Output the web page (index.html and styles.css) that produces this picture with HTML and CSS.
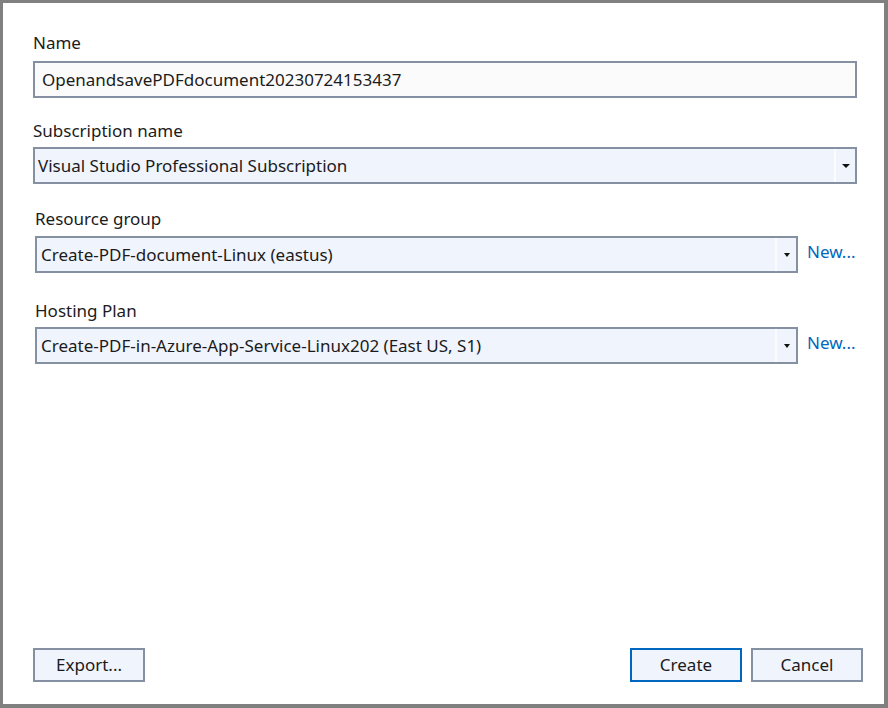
FILE: index.html
```html
<!DOCTYPE html>
<html lang="en">
<head>
<meta charset="utf-8">
<title>Create App Service</title>
<link rel="stylesheet" href="styles.css">
</head>
<body>
<div class="dialog">
  <div class="form">
    <div class="field field-name">
      <div class="label">Name</div>
      <div class="textbox">OpenandsavePDFdocument20230724153437</div>
    </div>
    <div class="field field-sub">
      <div class="label">Subscription name</div>
      <div class="combo combo-wide">
        <span class="combo-text">Visual Studio Professional Subscription</span>
        <span class="combo-btn"><span class="arrow arrow-big"></span></span>
      </div>
    </div>
    <div class="field field-rg">
      <div class="label">Resource group</div>
      <div class="row">
        <div class="combo">
          <span class="combo-text">Create-PDF-document-Linux (eastus)</span>
          <span class="combo-btn"><span class="arrow"></span></span>
        </div>
        <a class="link" href="#">New...</a>
      </div>
    </div>
    <div class="field field-hp">
      <div class="label">Hosting Plan</div>
      <div class="row">
        <div class="combo">
          <span class="combo-text">Create-PDF-in-Azure-App-Service-Linux202 (East US, S1)</span>
          <span class="combo-btn"><span class="arrow"></span></span>
        </div>
        <a class="link" href="#">New...</a>
      </div>
    </div>
  </div>
  <div class="footer">
    <button class="btn">Export...</button>
    <div class="footer-right">
      <button class="btn btn-primary">Create</button>
      <button class="btn">Cancel</button>
    </div>
  </div>
</div>
</body>
</html>
```

FILE: styles.css
```css
html, body {
  margin: 0;
  padding: 0;
  background: #ffffff;
}

body {
  font-family: "Noto Sans", "Open Sans", sans-serif;
  font-size: 17px;
  color: #1b1b1b;
}

.dialog {
  width: 888px;
  height: 708px;
  box-sizing: border-box;
  border-style: solid;
  border-color: #808080;
  border-width: 3px 4px 4px 3px;
  background: #ffffff;
  display: flex;
  flex-direction: column;
}

.form {
  flex: 1;
  padding: 28px 27px 0 30px;
  display: flex;
  flex-direction: column;
}

.label {
  line-height: 23px;
  height: 23px;
}

.field-name .label { margin-bottom: 7px; }
.field-sub { margin-top: 21px; }
.field-sub .label { margin-bottom: 5px; }
.field-rg { margin-top: 23px; margin-left: 2px; }
.field-rg .label { margin-bottom: 6px; }
.field-hp { margin-top: 26px; margin-left: 2px; }
.field-hp .label { margin-bottom: 5px; }

.textbox {
  height: 37px;
  box-sizing: border-box;
  border: 2px solid #8590a3;
  background: #fbfbfb;
  padding: 0 7px;
  display: flex;
  align-items: center;
  white-space: nowrap;
}

.combo {
  height: 37px;
  box-sizing: border-box;
  border: 2px solid #8590a3;
  background: #f0f4fc;
  display: flex;
  align-items: stretch;
  width: 763px;
}

.combo-wide {
  width: auto;
}

.combo-text {
  flex: 1;
  display: flex;
  align-items: center;
  padding-left: 4px;
  white-space: nowrap;
  overflow: hidden;
}

.combo-wide .combo-text {
  padding-left: 3px;
}

.combo-btn {
  width: 19px;
  border-left: 2px solid #fbfcff;
  display: flex;
  align-items: center;
  justify-content: center;
}

.arrow {
  width: 0;
  height: 0;
  border-left: 3.5px solid transparent;
  border-right: 3.5px solid transparent;
  border-top: 4px solid #111111;
  margin-top: 1px;
}

.arrow-big {
  border-left-width: 4px;
  border-right-width: 4px;
  border-top-width: 4px;
}

.row {
  display: flex;
  align-items: flex-start;
}

.link {
  margin-left: 9px;
  margin-top: 4px;
  color: #0067c0;
  text-decoration: none;
  line-height: 23px;
}

.footer {
  display: flex;
  justify-content: space-between;
  padding: 0 21px 22px 30px;
}

.footer-right {
  display: flex;
  gap: 9px;
}

.btn {
  width: 112px;
  height: 34px;
  box-sizing: border-box;
  border: 2px solid #8590a3;
  background: #f0f4fc;
  font-family: "Noto Sans", "Open Sans", sans-serif;
  font-size: 17px;
  color: #1b1b1b;
  padding: 0;
  margin: 0;
  line-height: 28px;
}

.btn-primary {
  border-color: #0067c0;
}
```
